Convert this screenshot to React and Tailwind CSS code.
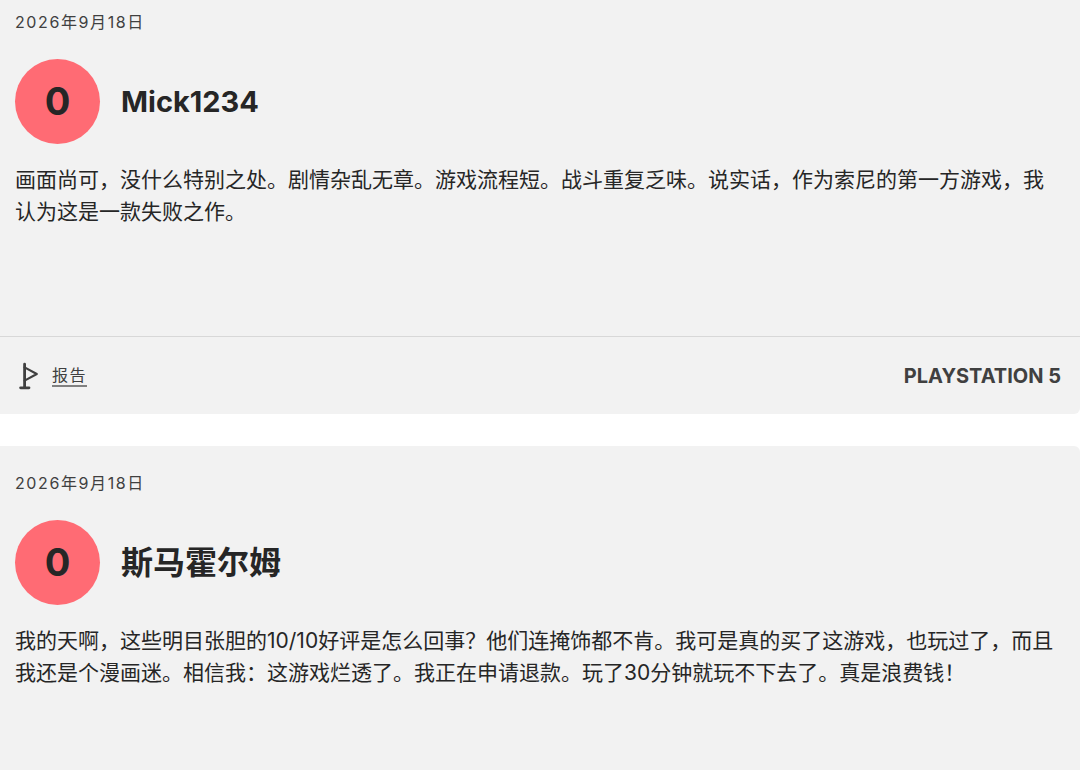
import React from "react";

const reviews = [
  {
    date: "2026年9月18日",
    score: 0,
    author: "Mick1234",
    text: "画面尚可，没什么特别之处。剧情杂乱无章。游戏流程短。战斗重复乏味。说实话，作为索尼的第一方游戏，我认为这是一款失败之作。",
    platform: "PlayStation 5",
  },
  {
    date: "2026年9月18日",
    score: 0,
    author: "斯马霍尔姆",
    text: "我的天啊，这些明目张胆的10/10好评是怎么回事？他们连掩饰都不肯。我可是真的买了这游戏，也玩过了，而且我还是个漫画迷。相信我：这游戏烂透了。我正在申请退款。玩了30分钟就玩不下去了。真是浪费钱！",
    platform: "PlayStation 5",
  },
];

// Chinese names are set larger than latin ones
const isHan = (name) => /\p{Script=Han}/u.test(name);

const FlagIcon = () => (
  <svg
    width="20"
    height="28"
    viewBox="0 0 20 28"
    fill="none"
    stroke="currentColor"
    strokeWidth="2.2"
    strokeLinecap="round"
    strokeLinejoin="round"
    aria-hidden="true"
  >
    <path d="M5.6 2.2V25.6M1.6 25.8H10" strokeWidth="2.8" />
    <path d="M5.6 5.4L17.8 12L5.6 18.6" />
  </svg>
);

const ReviewCard = ({ review }) => (
  <article className="bg-[#f2f2f2] rounded-r-md">
    <div className="pl-[15px] pr-5 pt-[25px] min-h-[351px]">
      <time className="block text-base leading-6 tracking-widest text-[#404040]">
        {review.date}
      </time>
      <div className="flex items-center gap-[21px] mt-[25px]">
        <div className="size-[85px] shrink-0 rounded-full bg-[#ff6b74] flex items-center justify-center text-[38px] font-bold">
          {review.score}
        </div>
        <h3 className={isHan(review.author) ? "text-[32px] font-bold" : "text-[29px] font-bold"}>
          {review.author}
        </h3>
      </div>
      <p className="mt-5 text-[21px] leading-8">{review.text}</p>
    </div>
    <footer className="flex items-center justify-between h-[78px] px-[19px] border-t border-[#d8d8d8] text-[#404040]">
      <a href="#report" className="flex items-center gap-[13px]">
        <FlagIcon />
        <span className="text-base leading-5 tracking-widest border-b-2 border-[#808080]">
          报告
        </span>
      </a>
      <span className="text-xl font-bold uppercase">{review.platform}</span>
    </footer>
  </article>
);

const App = () => (
  <main className="h-screen overflow-hidden bg-white text-[#262626] font-['Inter','Noto_Sans_CJK_SC',sans-serif]">
    <div className="-mt-[15px] flex flex-col gap-8">
      {reviews.map((review, index) => (
        <ReviewCard key={index} review={review} />
      ))}
    </div>
  </main>
);

export default App;
